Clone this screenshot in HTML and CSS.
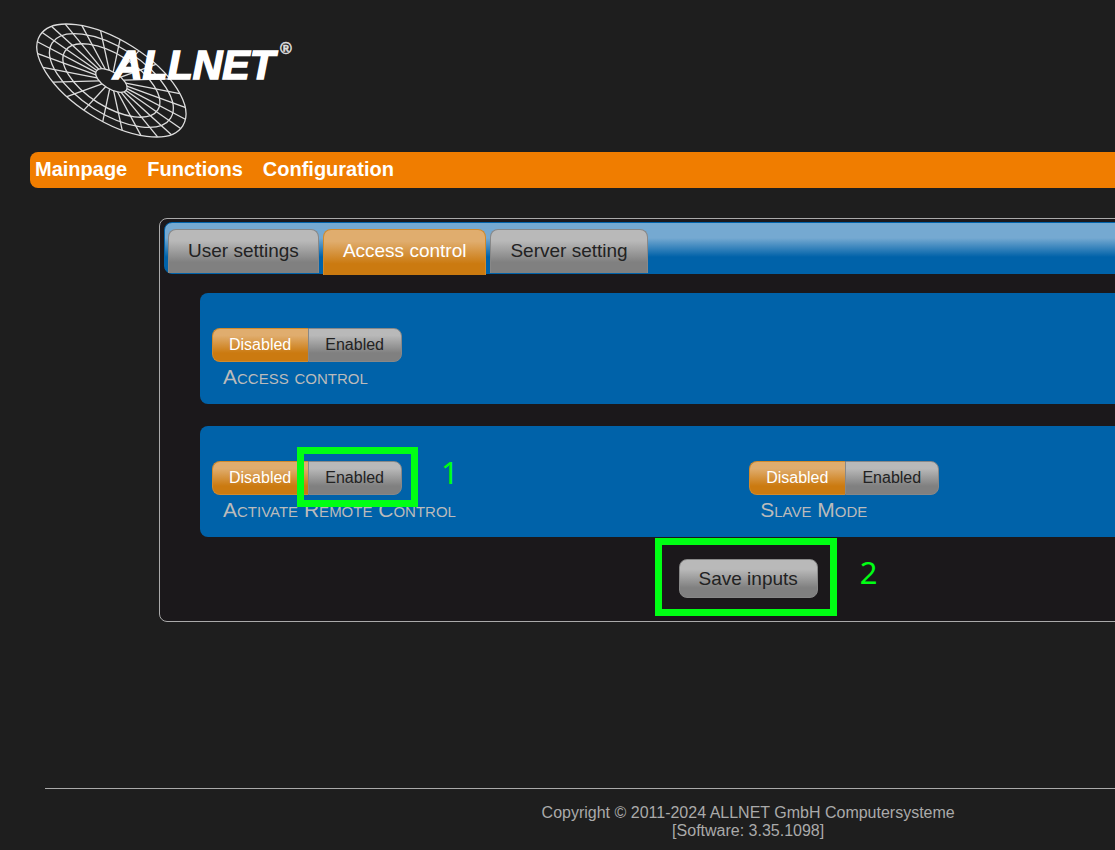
FILE: index.html
```html
<!DOCTYPE html>
<html lang="en">
<head>
    <meta charset="UTF-8">
    <meta name="viewport" content="width=device-width, initial-scale=1.0">
    <title>ALLNET - Access control</title>
    <link rel="stylesheet" href="styles.css">
</head>
<body>
    <div class="page">
        <header>
            <a href="#" class="logo" aria-label="ALLNET">
                <svg width="264" height="122" viewBox="30 20 264 122">
                    <defs>
                        <path id="spoke" d="M21 0H100" />
                    </defs>
                    <!-- wire disc -->
                    <g class="disc" transform="translate(111.4 80.5) rotate(32.4) scale(.845 .399)">
                        <circle r="100" />
                        <circle r="83" />
                        <circle r="65" />
                        <circle r="21" />
                        <use href="#spoke" transform="rotate(5)" />
                        <use href="#spoke" transform="rotate(20)" />
                        <use href="#spoke" transform="rotate(35)" />
                        <use href="#spoke" transform="rotate(50)" />
                        <use href="#spoke" transform="rotate(65)" />
                        <use href="#spoke" transform="rotate(80)" />
                        <use href="#spoke" transform="rotate(95)" />
                        <use href="#spoke" transform="rotate(110)" />
                        <use href="#spoke" transform="rotate(125)" />
                        <use href="#spoke" transform="rotate(140)" />
                        <use href="#spoke" transform="rotate(155)" />
                        <use href="#spoke" transform="rotate(170)" />
                        <use href="#spoke" transform="rotate(185)" />
                        <use href="#spoke" transform="rotate(200)" />
                        <use href="#spoke" transform="rotate(215)" />
                        <use href="#spoke" transform="rotate(230)" />
                        <use href="#spoke" transform="rotate(245)" />
                        <use href="#spoke" transform="rotate(260)" />
                        <use href="#spoke" transform="rotate(275)" />
                        <use href="#spoke" transform="rotate(290)" />
                        <use href="#spoke" transform="rotate(305)" />
                        <use href="#spoke" transform="rotate(320)" />
                        <use href="#spoke" transform="rotate(335)" />
                        <use href="#spoke" transform="rotate(350)" />
                    </g>
                    <text class="logo-name" x="113" y="79">ALLNET</text>
                    <text class="logo-reg" x="280" y="54">®</text>
                </svg>
            </a>
        </header>

        <nav class="menu">
            <a href="#">Mainpage</a>
            <a href="#">Functions</a>
            <a href="#">Configuration</a>
        </nav>

        <main class="panel">
            <div class="tabs">
                <a href="#" class="tab">User settings</a>
                <a href="#access" class="tab active">Access control</a>
                <a href="#" class="tab">Server setting</a>
            </div>

            <form class="settings" id="access">
                <div class="box">
                    <div class="field" role="radiogroup" aria-labelledby="access-title">
                        <div class="toggle">
                            <input type="radio" name="access" id="access-off" checked>
                            <label for="access-off">Disabled</label>
                            <input type="radio" name="access" id="access-on">
                            <label for="access-on">Enabled</label>
                        </div>
                        <div class="caption" id="access-title">Access control</div>
                    </div>
                </div>

                <div class="box">
                    <div class="field" role="radiogroup" aria-labelledby="remote-title">
                        <div class="toggle">
                            <input type="radio" name="remote" id="remote-off" checked>
                            <label for="remote-off">Disabled</label>
                            <input type="radio" name="remote" id="remote-on">
                            <label for="remote-on">Enabled</label>
                            <span class="mark mark-remote"><span class="mark-number">1</span></span>
                        </div>
                        <div class="caption" id="remote-title">Activate Remote Control</div>
                    </div>
                    <div class="field" role="radiogroup" aria-labelledby="slave-title">
                        <div class="toggle">
                            <input type="radio" name="slave" id="slave-off" checked>
                            <label for="slave-off">Disabled</label>
                            <input type="radio" name="slave" id="slave-on">
                            <label for="slave-on">Enabled</label>
                        </div>
                        <div class="caption" id="slave-title">Slave Mode</div>
                    </div>
                </div>

                <div class="actions">
                    <button type="button" class="save">Save inputs</button>
                    <span class="mark mark-save"><span class="mark-number">2</span></span>
                </div>
            </form>
        </main>

        <footer>
            Copyright © 2011-2024 ALLNET GmbH Computersysteme<br>
            [Software: 3.35.1098]
        </footer>
    </div>
</body>
</html>
```

FILE: styles.css
```css
* {
    box-sizing: border-box;
}
body {
    margin: 0;
    background-color: #1e1e1e;
    color: #aaa;
    font-family: "Liberation Sans", Arial, sans-serif;
    font-size: 16px;
    line-height: 18px;
    overflow-x: hidden;
}
a {
    text-decoration: none;
}
/* the layout is wider than the window and runs off to the right */
.page {
    width: 134.2%;
    padding: 20px 30px 0;
}

/* logo */
.logo, .logo svg {
    display: block;
}
.logo {
    width: fit-content;
    margin-bottom: 10px;
}
.disc {
    fill: none;
    stroke: #ddd;
    stroke-width: 1.3;
}
.disc circle, #spoke {
    vector-effect: non-scaling-stroke;
}
.logo-name {
    fill: white;
    stroke: white;
    stroke-width: 1.6;
    font-size: 41px;
    font-weight: bold;
    font-style: italic;
}
.logo-reg {
    fill: #ddd;
    stroke: #ddd;
    stroke-width: .5;
    font-size: 16px;
    font-weight: bold;
}

/* main menu */
.menu {
    display: flex;
    gap: 20px;
    padding: 5px 5px 7px;
    background-color: #f07d00;
    border-radius: 8px;
}
.menu a {
    color: white;
    font-size: 20px;
    font-weight: bold;
    line-height: 24px;
}

/* panel with tabs */
.panel {
    margin: 30px 129px 0;
    padding: 3px 4px;
    border: 1px solid #aaa;
    border-radius: 8px;
    background-color: #1b181b;
}
.tabs {
    display: flex;
    align-items: flex-start;
    gap: 4px;
    height: 52px;
    padding: 6px 3px 0;
    border: 1px solid #0062a9;
    border-radius: 8px;
    background: linear-gradient(#75a9d1 30%, #0062a9 68%);
}
.tab {
    height: 44px;
    padding: 0 19px;
    border: 1px solid #888;
    border-bottom: 0;
    border-radius: 8px 8px 0 0;
    background: linear-gradient(#b9b9b9 25%, #808080 75%);
    color: #222;
    font-size: 19px;
    line-height: 42px;
}
.tab.active {
    height: 46px;
    border-color: #d18a2c;
    background: linear-gradient(#e0ad6e 25%, #cb7a10 75%);
    color: white;
}

.settings {
    padding: 19px 36px 20px;
}
.box {
    display: grid;
    grid-template-columns: 1fr 1fr;
    column-gap: 2px;
    margin-bottom: 22px;
    padding: 35px 12px 15px;
    border-radius: 8px;
    background-color: #0062a9;
}
.toggle {
    position: relative;
    display: flex;
    width: fit-content;
}
.toggle input {
    position: absolute;
    opacity: 0;
}
.toggle label {
    padding: 7px 16px;
    border: 1px solid #888;
    background: linear-gradient(#b9b9b9 20%, #808080 75%);
    color: #222;
    cursor: pointer;
}
.toggle input:checked + label {
    border-color: #d18a2c;
    background: linear-gradient(#e0ad6e 20%, #cb7a10 75%);
    color: white;
}
.toggle label:first-of-type {
    padding: 7px 17px 7px 16px;
    border-right: 0;
    border-radius: 8px 0 0 8px;
}
.toggle label:last-of-type {
    padding: 7px 17px 7px 16px;
    border-radius: 0 8px 8px 0;
}
.caption {
    margin-top: 3px;
    padding-left: 11px;
    color: #bbb;
    font-size: 21px;
    font-variant: small-caps;
    line-height: 24px;
}
.actions {
    position: relative;
    width: fit-content;
    margin: 0 auto;
}
.save {
    display: block;
    padding: 7px 19px;
    border: 1px solid #888;
    border-radius: 8px;
    background: linear-gradient(#b9b9b9 25%, #808080 75%);
    color: #222;
    font-family: inherit;
    font-size: 19px;
    line-height: 23px;
    cursor: pointer;
}

/* numbered marks over the controls */
.mark {
    position: absolute;
    border: 7px solid #00ff14;
    pointer-events: none;
}
.mark-remote {
    top: -14px;
    right: -16px;
    bottom: -12px;
    width: 121px;
}
.mark-save {
    top: -21px;
    right: -19px;
    bottom: -18px;
    left: -24px;
}
.mark-number {
    position: absolute;
    top: 50%;
    left: 100%;
    margin: -25px 0 0 30px;
    color: #00ff14;
    font-family: "Noto Sans", sans-serif;
    font-size: 31px;
    line-height: 40px;
}

footer {
    margin: 166px 15px 0;
    padding: 15px 0 11px;
    border-top: 1px solid #aaa;
    text-align: center;
}
```
